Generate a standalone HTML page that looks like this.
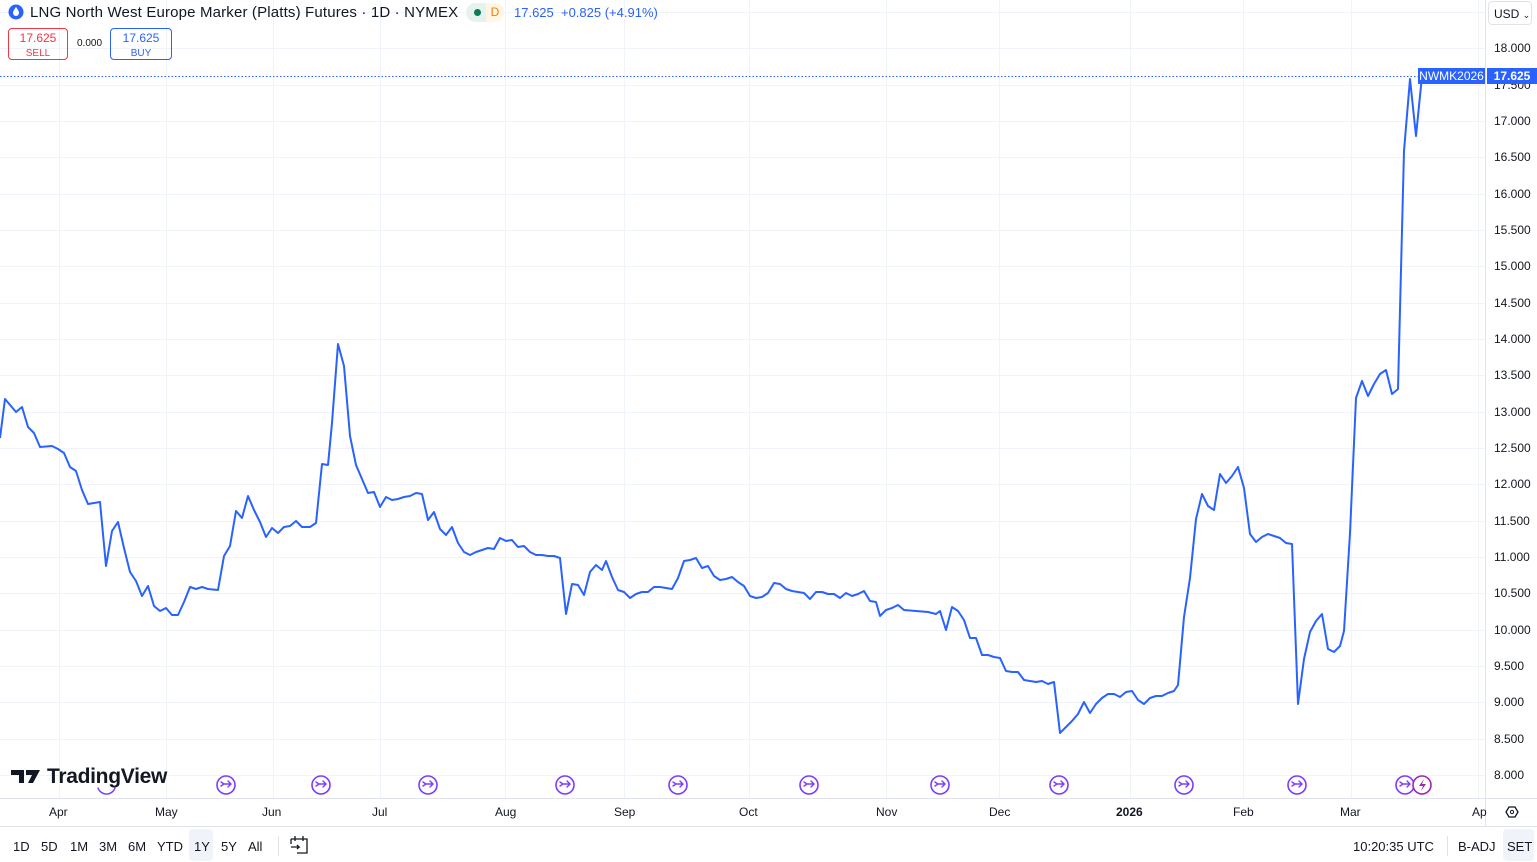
<!DOCTYPE html>
<html><head><meta charset="utf-8"><style>
body{margin:0;width:1537px;height:862px;overflow:hidden;background:#fff;font-family:"Liberation Sans",sans-serif;position:relative}
.a{position:absolute;white-space:nowrap}
</style></head><body>
<svg class="a" style="left:0;top:0" width="1537" height="862">
<g stroke="#f0f3fa" stroke-width="1">
<line x1="59.5" y1="0" x2="59.5" y2="798"/><line x1="166.5" y1="0" x2="166.5" y2="798"/><line x1="273.5" y1="0" x2="273.5" y2="798"/><line x1="380.5" y1="0" x2="380.5" y2="798"/><line x1="505.5" y1="0" x2="505.5" y2="798"/><line x1="624.5" y1="0" x2="624.5" y2="798"/><line x1="749.5" y1="0" x2="749.5" y2="798"/><line x1="886.5" y1="0" x2="886.5" y2="798"/><line x1="999.5" y1="0" x2="999.5" y2="798"/><line x1="1130.5" y1="0" x2="1130.5" y2="798"/><line x1="1243.5" y1="0" x2="1243.5" y2="798"/><line x1="1351.5" y1="0" x2="1351.5" y2="798"/><line x1="1478.5" y1="0" x2="1478.5" y2="798"/>
<line x1="0" y1="12.5" x2="1485" y2="12.5"/><line x1="0" y1="48.5" x2="1485" y2="48.5"/><line x1="0" y1="85.5" x2="1485" y2="85.5"/><line x1="0" y1="121.5" x2="1485" y2="121.5"/><line x1="0" y1="157.5" x2="1485" y2="157.5"/><line x1="0" y1="194.5" x2="1485" y2="194.5"/><line x1="0" y1="230.5" x2="1485" y2="230.5"/><line x1="0" y1="266.5" x2="1485" y2="266.5"/><line x1="0" y1="303.5" x2="1485" y2="303.5"/><line x1="0" y1="339.5" x2="1485" y2="339.5"/><line x1="0" y1="375.5" x2="1485" y2="375.5"/><line x1="0" y1="412.5" x2="1485" y2="412.5"/><line x1="0" y1="448.5" x2="1485" y2="448.5"/><line x1="0" y1="484.5" x2="1485" y2="484.5"/><line x1="0" y1="521.5" x2="1485" y2="521.5"/><line x1="0" y1="557.5" x2="1485" y2="557.5"/><line x1="0" y1="593.5" x2="1485" y2="593.5"/><line x1="0" y1="630.5" x2="1485" y2="630.5"/><line x1="0" y1="666.5" x2="1485" y2="666.5"/><line x1="0" y1="702.5" x2="1485" y2="702.5"/><line x1="0" y1="739.5" x2="1485" y2="739.5"/><line x1="0" y1="775.5" x2="1485" y2="775.5"/>
</g>
<line x1="1485.5" y1="0" x2="1485.5" y2="826" stroke="#e0e3eb"/>
<line x1="0" y1="798.5" x2="1537" y2="798.5" stroke="#e0e3eb"/>
<line x1="0" y1="826.5" x2="1537" y2="826.5" stroke="#e0e3eb"/>
<line x1="0" y1="76.5" x2="1420" y2="76.5" stroke="#2962ff" stroke-dasharray="1.5,2"/>
<polyline fill="none" stroke="#2962ff" stroke-width="2" stroke-linejoin="round" points="0,438 5,399 16,412 22,407 28,427 34,433 40,447 52,446 58,449 64,453 70,467 76,471 82,490 88,504 100,502 106,566 112,531 118,522 124,548 130,572 136,581 142,596 148,586 154,606 160,611 166,608 172,615 178,615 184,602 190,587 196,589 202,587 208,589 218,590 224,556 230,546 236,511 242,518 248,496 254,510 260,522 266,537 272,528 278,533 284,527 290,526 296,521 302,527 310,527 316,523 322,464 328,465 332,423 338,344 344,366 350,436 356,465 362,479 368,493 374,492 380,507 386,497 392,500 398,499 404,497 410,496 416,493 422,494 428,520 434,512 440,529 446,535 452,527 458,543 464,552 470,555 476,552 482,550 488,548 494,549 500,538 506,541 512,540 518,547 524,546 530,552 536,555 542,555 548,556 554,556 560,558 566,614 572,584 578,585 584,595 590,572 596,565 602,570 606,561 612,577 618,590 624,592 630,598 636,594 642,592 648,592 654,587 660,587 666,588 672,589 678,578 684,561 690,560 696,558 702,568 708,566 714,576 720,580 726,579 732,577 738,582 744,586 750,596 756,598 762,597 768,593 774,583 780,584 786,589 792,591 798,592 804,593 810,599 816,592 822,592 828,594 834,594 840,598 846,593 852,596 858,594 864,591 870,601 876,602 880,616 886,610 892,608 898,605 904,610 916,611 928,612 936,614 940,611 946,630 952,607 958,611 964,620 970,638 976,638 982,655 988,655 994,657 1000,658 1006,671 1012,672 1018,672 1024,680 1030,681 1036,682 1042,681 1048,684 1054,682 1060,733 1066,727 1072,721 1078,714 1084,702 1090,713 1096,704 1102,698 1108,694 1114,694 1120,697 1126,692 1132,691 1138,700 1144,704 1150,698 1156,696 1162,696 1168,693 1174,691 1178,685 1184,617 1190,578 1196,519 1202,494 1208,506 1214,510 1220,474 1226,483 1232,476 1238,467 1244,488 1250,534 1256,542 1262,537 1268,534 1274,536 1280,538 1286,543 1292,544 1298,704 1304,659 1310,632 1316,621 1322,614 1328,649 1334,652 1340,646 1344,631 1350,533 1356,398 1362,381 1368,396 1374,384 1380,374 1386,370 1392,394 1398,389 1404,151 1410,79 1416,136 1422,76"/>
<g fill="#fff" stroke="#7b3cff" stroke-width="1.6">
<circle cx="226" cy="785" r="9"/><circle cx="321" cy="785" r="9"/><circle cx="428" cy="785" r="9"/><circle cx="565" cy="785" r="9"/><circle cx="678" cy="785" r="9"/><circle cx="809" cy="785" r="9"/><circle cx="940" cy="785" r="9"/><circle cx="1059" cy="785" r="9"/><circle cx="1184" cy="785" r="9"/><circle cx="1297" cy="785" r="9"/><circle cx="1405" cy="785" r="9"/>
</g>
<g fill="none" stroke="#7b3cff" stroke-width="1.4" stroke-linecap="round">
<path d="M221 782l3 2-3 2M224 784h7M228 781l3 3-3 3"/>
<path d="M316 782l3 2-3 2M319 784h7M323 781l3 3-3 3"/><path d="M423 782l3 2-3 2M426 784h7M430 781l3 3-3 3"/><path d="M560 782l3 2-3 2M563 784h7M567 781l3 3-3 3"/><path d="M673 782l3 2-3 2M676 784h7M680 781l3 3-3 3"/><path d="M804 782l3 2-3 2M807 784h7M811 781l3 3-3 3"/><path d="M935 782l3 2-3 2M938 784h7M942 781l3 3-3 3"/><path d="M1054 782l3 2-3 2M1057 784h7M1061 781l3 3-3 3"/><path d="M1179 782l3 2-3 2M1182 784h7M1186 781l3 3-3 3"/><path d="M1292 782l3 2-3 2M1295 784h7M1299 781l3 3-3 3"/><path d="M1400 782l3 2-3 2M1403 784h7M1407 781l3 3-3 3"/>
<path d="M98 788a9 9 0 0 0 17 0"/>
</g>
<circle cx="1422" cy="785" r="9" fill="#fff" stroke="#9c27b0" stroke-width="1.6"/>
<path d="M1424 779l-5 7h4l-2 5 5-7h-4z" fill="#9c27b0"/>
<path d="M1506 812l3-5h6l3 5-3 5h-6z" fill="none" stroke="#131722" stroke-width="1.3"/><circle cx="1512" cy="812" r="1.6" fill="none" stroke="#131722"/>
<path d="M291 839h16v14h-10M291 839v5M295 836v5M303 836v5M291 847h8l-2-2M299 847l-2 2" fill="none" stroke="#131722" stroke-width="1.3"/>
<line x1="278.5" y1="836" x2="278.5" y2="856" stroke="#e0e3eb"/>
<line x1="1447.5" y1="836" x2="1447.5" y2="856" stroke="#e0e3eb"/>
<circle cx="16" cy="12" r="7.5" fill="#2962ff"/><path d="M16 7c-2 3-3 4-3 6a3 3 0 0 0 6 0c0-2-1-3-3-6z" fill="#fff"/>
<path d="M11 770h13v13h-5v-8h-8z M26 770h14l-7 13h-5l4-8h-6z" fill="#131722"/>
</svg>
<div class="a" style="left:30px;top:4px;font-size:15px;color:#131722;letter-spacing:0.16px">LNG North West Europe Marker (Platts) Futures · 1D · NYMEX</div>
<div class="a" style="left:466px;top:3px;width:38px;height:19px;border-radius:10px;background:#e6f2ee"></div>
<div class="a" style="left:474px;top:9px;width:7px;height:7px;border-radius:50%;background:#0b7a5a"></div>
<div class="a" style="left:486px;top:3px;width:18px;height:19px;background:#fff6e6;border-radius:0 10px 10px 0;color:#f57c00;font-size:12px;line-height:19px;text-align:center">D</div>
<div class="a" style="left:514px;top:5px;font-size:13px;color:#2962ff">17.625 &nbsp;+0.825 (+4.91%)</div>
<div class="a" style="left:8px;top:28px;width:60px;height:32px;border:1px solid #f23645;border-radius:4px;text-align:center;font-size:12px;color:#f23645;line-height:14px;padding-top:2px;box-sizing:border-box">17.625<br><span style="font-size:10px">SELL</span></div>
<div class="a" style="left:77px;top:38px;font-size:10px;color:#131722">0.000</div>
<div class="a" style="left:110px;top:28px;width:62px;height:32px;border:1px solid #2962ff;border-radius:4px;text-align:center;font-size:12px;color:#2962ff;line-height:14px;padding-top:2px;box-sizing:border-box">17.625<br><span style="font-size:10px">BUY</span></div>
<div class="a" style="left:1488px;top:1px;width:44px;height:24px;border:1px solid #e0e3eb;border-radius:4px;font-size:12px;line-height:24px;padding-left:5px;box-sizing:border-box;color:#131722">USD <span style="font-size:9px">⌄</span></div>
<div class="a" style="left:1494px;top:0;font-size:12px;color:#131722;line-height:14px">
<div style="position:absolute;top:41px">18.000</div><div style="position:absolute;top:78px">17.500</div><div style="position:absolute;top:114px">17.000</div><div style="position:absolute;top:150px">16.500</div><div style="position:absolute;top:187px">16.000</div><div style="position:absolute;top:223px">15.500</div><div style="position:absolute;top:259px">15.000</div><div style="position:absolute;top:296px">14.500</div><div style="position:absolute;top:332px">14.000</div><div style="position:absolute;top:368px">13.500</div><div style="position:absolute;top:405px">13.000</div><div style="position:absolute;top:441px">12.500</div><div style="position:absolute;top:477px">12.000</div><div style="position:absolute;top:514px">11.500</div><div style="position:absolute;top:550px">11.000</div><div style="position:absolute;top:586px">10.500</div><div style="position:absolute;top:623px">10.000</div><div style="position:absolute;top:659px">9.500</div><div style="position:absolute;top:695px">9.000</div><div style="position:absolute;top:732px">8.500</div><div style="position:absolute;top:768px">8.000</div>
</div>
<div class="a" style="left:1418px;top:68px;width:67px;height:16px;background:#2962ff;color:#fff;font-size:12px;line-height:16px;text-align:center">NWMK2026</div>
<div class="a" style="left:1487px;top:68px;width:50px;height:16px;background:#2962ff;color:#fff;font-size:12px;font-weight:bold;line-height:16px;text-align:center">17.625</div>
<div class="a" style="left:47px;top:765px;font-size:21px;font-weight:bold;color:#131722;letter-spacing:-0.3px">TradingView</div>
<div class="a" style="top:805px;font-size:12px;color:#131722;left:0;width:1485px;height:14px">
<span class="a" style="left:49px">Apr</span><span class="a" style="left:155px">May</span><span class="a" style="left:262px">Jun</span><span class="a" style="left:372px">Jul</span><span class="a" style="left:495px">Aug</span><span class="a" style="left:614px">Sep</span><span class="a" style="left:739px">Oct</span><span class="a" style="left:876px">Nov</span><span class="a" style="left:989px">Dec</span><span class="a" style="left:1116px;font-weight:bold">2026</span><span class="a" style="left:1233px">Feb</span><span class="a" style="left:1340px">Mar</span><span class="a" style="left:1472px">Ap</span>
</div>
<div class="a" style="left:189px;top:829px;width:24px;height:32px;background:#f0f3fa;border-radius:4px"></div>
<div class="a" style="left:1503px;top:829px;width:31px;height:32px;background:#f0f3fa;border-radius:4px"></div>
<div class="a" style="top:839px;font-size:13px;color:#131722;left:0;width:1537px">
<span class="a" style="left:13px">1D</span><span class="a" style="left:41px">5D</span><span class="a" style="left:70px">1M</span><span class="a" style="left:99px">3M</span><span class="a" style="left:128px">6M</span><span class="a" style="left:157px">YTD</span><span class="a" style="left:194px">1Y</span><span class="a" style="left:221px">5Y</span><span class="a" style="left:248px">All</span>
<span class="a" style="left:1353px">10:20:35 UTC</span><span class="a" style="left:1458px">B-ADJ</span><span class="a" style="left:1507px">SET</span>
</div>
</body></html>
